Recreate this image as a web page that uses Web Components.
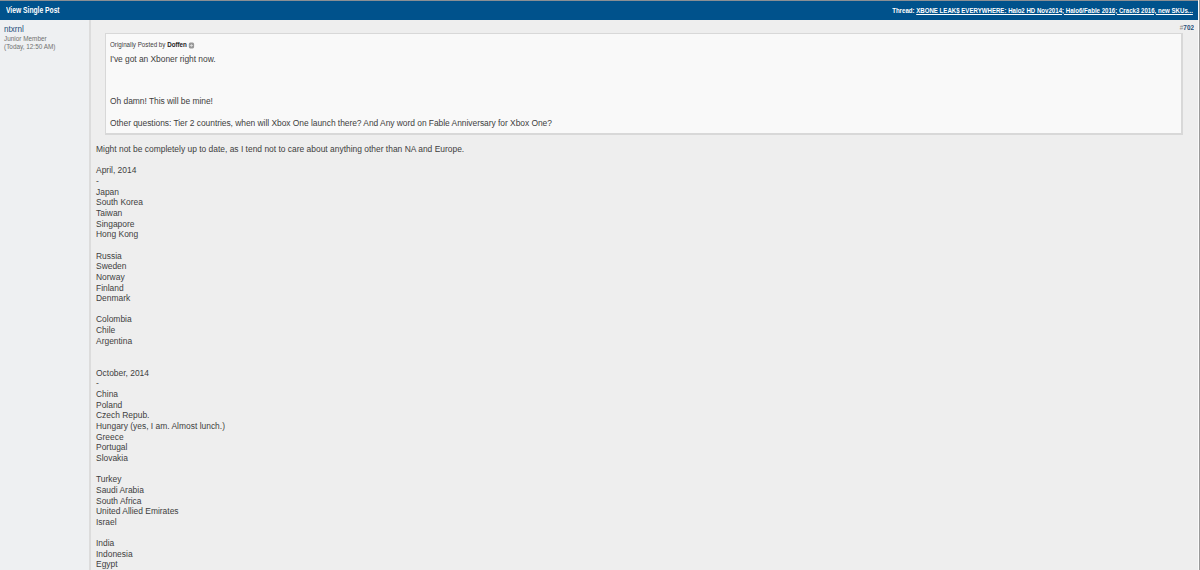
<!DOCTYPE html>
<html>
<head>
<meta charset="utf-8">
<title>View Single Post</title>
<style>
  html, body { margin: 0; height: 100%; overflow: hidden; background: #eeeeee; }
  body { font: 8.45px "Liberation Sans", Arial, sans-serif; color: #3e3e3e; }
</style>
</head>
<body>
<single-post-page>
  <post-bar slot="bar" thread="XBONE LEAK$ EVERYWHERE: Halo2 HD Nov2014; Halo6/Fable 2016; Crack3 2016, new SKUs...">View Single Post</post-bar>
  <user-info slot="side" name="ntxrnl" rank="Junior Member" date="(Today, 12:50 AM)"></user-info>
  <post-number slot="main">702</post-number>
  <post-quote slot="main" author="Doffen">
    <p>I've got an Xboner right now.</p>
    <p class="gap">Oh damn! This will be mine!</p>
    <p>Other questions: Tier 2 countries, when will Xbox One launch there? And Any word on Fable Anniversary for Xbox One?</p>
  </post-quote>
  <post-text slot="main" lines="Might not be completely up to date, as I tend not to care about anything other than NA and Europe.||April, 2014|-|Japan|South Korea|Taiwan|Singapore|Hong Kong||Russia|Sweden|Norway|Finland|Denmark||Colombia|Chile|Argentina|||October, 2014|-|China|Poland|Czech Repub.|Hungary (yes, I am. Almost lunch.)|Greece|Portugal|Slovakia||Turkey|Saudi Arabia|South Africa|United Allied Emirates|Israel||India|Indonesia|Egypt"></post-text>
</single-post-page>
<script>
class SinglePostPage extends HTMLElement {
  constructor () {
    super()
    this.attachShadow({ mode: 'open' }).innerHTML = `
    <style>
      :host { display: flex; flex-direction: column; height: 570px; overflow: hidden; background: #fbfbfb; padding-right: 1px; border-right: 1px solid #9a9a9a; box-sizing: border-box; }
      .row { flex: 1; display: flex; min-height: 0; background: #eeeeee; }
      .side { width: 89px; flex: none; background: #eef0f2; border-right: 2px solid #dcdcdc; }
      .main { flex: 1; min-width: 0; padding: 3px 4px 0 5px; }
    </style>
    <slot name="bar"></slot>
    <div class="row">
      <div class="side"><slot name="side"></slot></div>
      <div class="main"><slot name="main"></slot></div>
    </div>`
  }
}

class PostBar extends HTMLElement {
  constructor () {
    super()
    this.attachShadow({ mode: 'open' })
  }
  connectedCallback () {
    this.shadowRoot.innerHTML = `
    <style>
      :host { display: flex; justify-content: space-between; align-items: center; height: 18px; padding: 0 5px 1px 6px; background: #00528c; border-top: 1px solid #8a8f94; color: #fff; font: bold 7.5px "Liberation Sans", Arial, sans-serif; box-sizing: content-box; }
      a { color: #fff; text-decoration: underline; }
      span { display: inline-block; white-space: nowrap; }
      .title { font-size: 8.2px; transform: scaleX(.82); transform-origin: left center; }
      .thread { transform: scaleX(.813); transform-origin: right center; }
    </style>
    <span class="title"><slot></slot></span>
    <span class="thread">Thread: <a href="#">${this.getAttribute('thread')}</a></span>`
  }
}

class UserInfo extends HTMLElement {
  constructor () {
    super()
    this.attachShadow({ mode: 'open' })
  }
  connectedCallback () {
    this.shadowRoot.innerHTML = `
    <style>
      :host { display: block; padding: 3px 0 0 4px; font-size: 6.4px; line-height: 8px; color: #707070; }
      .name { display: block; font-size: 9.5px; line-height: 12px; color: #1f4e79; transform: scaleX(.85); transform-origin: left center; }
    </style>
    <a class="name">${this.getAttribute('name')}</a>
    <div>${this.getAttribute('rank')}</div>
    <div>${this.getAttribute('date')}</div>`
  }
}

class PostNumber extends HTMLElement {
  constructor () {
    super()
    this.attachShadow({ mode: 'open' }).innerHTML = `
    <style>
      :host { display: block; height: 10px; text-align: right; font-size: 7.5px; line-height: 10px; font-weight: bold; color: #1f4e79; transform: scaleX(.85); transform-origin: right center; }
      span { color: #888; font-weight: normal; }
    </style>
    <span>#</span><slot></slot>`
  }
}

class PostQuote extends HTMLElement {
  constructor () {
    super()
    this.attachShadow({ mode: 'open' })
  }
  connectedCallback () {
    this.shadowRoot.innerHTML = `
    <style>
      :host { display: block; margin: 0 11px 9px 9px; padding: 6px 4px 0 4px; height: 93px; background: #f9f9f9; border: 1px solid #d8d8d8; border-width: 1px 2px 2px 1px; }
      .by { font-size: 7px; line-height: 10px; margin-bottom: 3px; white-space: nowrap; transform: scaleX(.89); transform-origin: left center; }
      .by b { color: #222; }
      svg { vertical-align: -2px; }
      ::slotted(p) { margin: 0 0 9.5px; line-height: 12px; letter-spacing: -.04px; }
      ::slotted(p.gap) { margin-top: 30px; }
    </style>
    <div class="by">Originally Posted by <b>${this.getAttribute('author')}</b>
      <svg width="7" height="7" viewBox="0 0 8 8"><rect x=".5" y=".5" width="7" height="7" rx="2" fill="#999"/><path d="M2 4h4M4 2.5v3" stroke="#ddd"/></svg>
    </div>
    <slot></slot>`
  }
}

class PostText extends HTMLElement {
  constructor () {
    super()
    this.attachShadow({ mode: 'open' })
  }
  connectedCallback () {
    const lines = this.getAttribute('lines').split('|')
    this.shadowRoot.innerHTML = `
    <style>
      :host { display: block; line-height: 10.65px; }
      div { min-height: 10.65px; white-space: nowrap; }
    </style>
    ${lines.map(line => `<div>${line}</div>`).join('')}`
  }
}

customElements.define('single-post-page', SinglePostPage)
customElements.define('post-bar', PostBar)
customElements.define('user-info', UserInfo)
customElements.define('post-number', PostNumber)
customElements.define('post-quote', PostQuote)
customElements.define('post-text', PostText)
</script>
</body>
</html>
